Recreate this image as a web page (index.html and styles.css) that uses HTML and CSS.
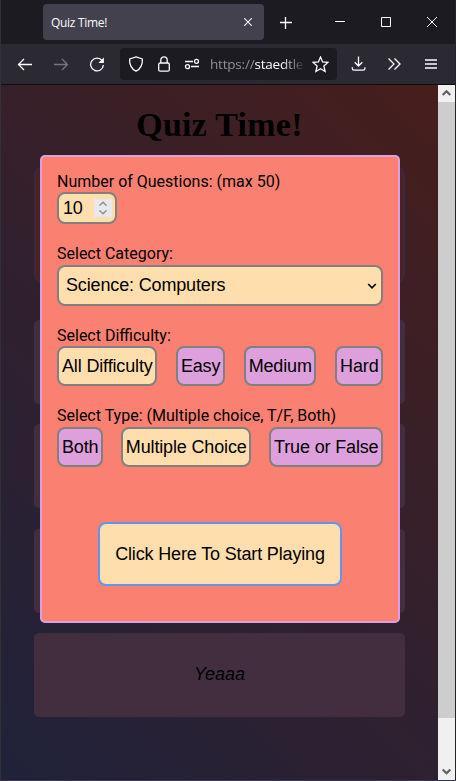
FILE: index.html
```html
<!DOCTYPE html>
<html lang="en">
<head>
<meta charset="utf-8">
<title>Quiz Time!</title>
<link rel="stylesheet" href="styles.css">
</head>
<body>
<div class="window">
  <header class="tabs">
    <div class="tab"><span>Quiz Time!</span>
      <svg width="8" height="8" viewBox="0 0 8 8"><path d="M0.3 0.3L7.7 7.7M7.7 0.3L0.3 7.7"/></svg>
    </div>
    <svg class="plus" width="12" height="12" viewBox="0 0 12 12"><path d="M5.500 0v12M0 5.500h12"/></svg>
    <svg class="min" width="10" height="10" viewBox="0 0 10 10"><path d="M0 4.5h10"/></svg>
    <svg class="max" width="10" height="10" viewBox="0 0 10 10"><path d="M.5 .5h9v9h-9z"/></svg>
    <svg class="close" width="10" height="10" viewBox="0 0 10 10"><path d="M0 0l10 10M10 0L0 10"/></svg>
  </header>
  <nav class="toolbar">
    <svg class="back" width="16" height="16" viewBox="0 0 16 16"><path d="M15 8.500H1.5M7 3L1.5 8.500L7 14"/></svg>
    <svg class="forward" width="16" height="16" viewBox="0 0 16 16"><path d="M1 8.500h13.5M9 3L14.5 8.500L9 14"/></svg>
    <svg class="reload" width="16" height="16" viewBox="0 0 16 16"><path d="M13.2 4.700A6.4 6.4 0 1 0 14.4 9.100"/><path class="solid" d="M14.9 1.500v5.6H9.4z"/></svg>
    <div class="address">
      <svg width="16" height="16" viewBox="0 0 16 16"><path d="M8 .9L14.3 3C14.8 7.8 12.8 13.2 8 15.2C3.2 13.2 1.2 7.8 1.7 3z"/></svg>
      <svg width="16" height="16" viewBox="0 0 16 16"><rect x="2.7" y="7" width="10.6" height="8.2" rx="1.5"/><path d="M4.8 7V4a3.2 3.2 0 0 1 6.4 0v3"/></svg>
      <svg width="16" height="16" viewBox="0 0 16 16"><path d="M1 5.5h8M7 10.5h8"/><circle cx="12.5" cy="5.3" r="2"/><circle cx="3.5" cy="10.7" r="2"/></svg>
      <span class="url">https://<b>staedtler</b></span>
      <svg class="star" width="17" height="17" viewBox="0 0 17 17"><path d="M8.5 1l2.1 4.9 5.3.5-4 3.5 1.2 5.6-4.6-2.8-4.6 2.8 1.2-5.6-4-3.5 5.3-.5z"/></svg>
    </div>
    <svg class="download" width="16" height="16" viewBox="0 0 16 16"><path d="M7.5 .5v9.5M3.7 6.2l3.8 3.8 3.8-3.8M1.3 11.2v1.2c0 1.2.6 1.8 1.8 1.8h9c1.2 0 1.8-.6 1.8-1.8v-1.2"/></svg>
    <svg class="more" width="14" height="14" viewBox="0 0 14 14"><path d="M1.5 1.5L7 7l-5.5 5.5M7.5 1.5L13 7l-5.500 5.500"/></svg>
    <svg class="menu" width="12" height="11" viewBox="0 0 12 11"><path d="M0 1h12M0 5h12M0 9h12"/></svg>
  </nav>
  <div class="viewport">
    <main class="page">
      <h1>Quiz Time!</h1>
      <div class="question"></div>
      <div class="answers">
        <div class="answer"></div>
        <div class="answer"></div>
        <div class="answer"></div>
        <div class="answer">Yeaaa</div>
      </div>
      <form class="modal">
        <label>Number of Questions: (max 50)</label>
        <div class="number field">10
          <span class="spinner"><svg width="10" height="14" viewBox="0 0 10 14"><path d="M1.500 4.500L5 1.300L8.500 4.500M1.500 9.500L5 12.700L8.500 9.500"/></svg></span>
        </div>
        <label>Select Category:</label>
        <div class="select field">Science: Computers
          <svg width="10" height="8" viewBox="0 0 10 8"><path d="M1.200 2L5 5.800L8.800 2"/></svg>
        </div>
        <label>Select Difficulty:</label>
        <div class="options difficulty">
          <button type="button" class="field chosen">All Difficulty</button>
          <button type="button" class="field">Easy</button>
          <button type="button" class="field">Medium</button>
          <button type="button" class="field">Hard</button>
        </div>
        <label>Select Type: (Multiple choice, T/F, Both)</label>
        <div class="options types">
          <button type="button" class="field">Both</button>
          <button type="button" class="field chosen">Multiple Choice</button>
          <button type="button" class="field">True or False</button>
        </div>
        <button type="button" class="start">Click Here To Start Playing</button>
      </form>
    </main>
    <div class="scrollbar">
      <svg width="17" height="17" viewBox="0 0 17 17"><path d="M4.700 10L8.500 6.200L12.300 10"/></svg>
      <div class="thumb"></div>
      <svg width="17" height="17" viewBox="0 0 17 17"><path d="M4.700 6.500L8.500 10.300L12.300 6.500"/></svg>
    </div>
  </div>
</div>
</body>
</html>
```
FILE: styles.css
```css
* { box-sizing: border-box; }
body { margin: 0; }
svg { display: block; flex: none; fill: none; stroke: #fbfbfe; stroke-width: 1.3; }
.window {
  width: 456px; height: 781px; overflow: hidden;
  border: solid #303235; border-width: 0 1px 1px;
  border-right-color: #25262a; border-bottom-color: #3a3650;
  background: #1c1b22;
  display: flex; flex-direction: column;
}
.tabs { height: 44px; display: flex; align-items: center; padding-left: 42px; flex: none; }
.tab {
  width: 221px; height: 36px; padding: 0 12px 0 8px; border-radius: 4px;
  background: #42414d; color: #fbfbfe;
  display: flex; align-items: center; justify-content: space-between;
  font: 12px "Open Sans", "Noto Sans", sans-serif; letter-spacing: -.3px;
}
.tab svg { stroke-width: 1.1; }
.plus { margin-left: 16px; margin-top: 1px; }
.min { margin-left: 43px; stroke-width: 1; }
.max { margin-left: 36px; stroke-width: 1; }
.close { margin-left: 36px; stroke-width: 1; }
.toolbar {
  height: 41px; flex: none; background: #2b2a33; border-bottom: 1px solid #0c0c0d;
  display: flex; align-items: center; padding-left: 16px;
}
.forward { margin-left: 20px; stroke: #77767d; }
.reload { margin-left: 20px; }
.solid { fill: #fbfbfe; stroke: none; }
.address {
  width: 217px; height: 32px; margin-left: 15px; padding: 0 8px; border-radius: 4px;
  background: #1c1b22; display: flex; align-items: center; gap: 12px;
}
.url {
  flex: 1; min-width: 0; white-space: nowrap; margin-left: -2px; margin-right: -11px;
  font: 13.500px "Open Sans", "Noto Sans", sans-serif; letter-spacing: -.2px; color: #8f8f97;
  -webkit-mask-image: linear-gradient(to right, #000 70%, transparent 94%);
  mask-image: linear-gradient(to right, #000 70%, transparent 94%);
}
.url b { font-weight: 400; color: #fbfbfe; }
.download { margin-left: 14px; }
.more { margin-left: 20px; }
.menu { margin-left: 24px; }
.viewport { flex: 1; display: flex; }
.page {
  position: relative; width: 437px; padding: 0 33px;
  background: linear-gradient(45deg, #20223a, #32202d 50%, #471e1c);
}
h1 {
  margin: 0; height: 81px; padding-top: 20px; text-align: center;
  font: bold 34px/40px "Liberation Serif", serif; letter-spacing: .25px; color: #000;
}
.question { height: 118px; border: 2px solid #3b2940; border-radius: 10px; background: #4b221f; }
.answers { display: grid; grid-auto-rows: 84px; gap: 20.300px; margin-top: 36px; }
.answer {
  border-radius: 5px; background: #432e40; color: #000;
  display: flex; align-items: center; justify-content: center;
  font: italic 18px "Liberation Sans", sans-serif;
}
.modal {
  position: absolute; left: 39px; top: 70px; width: 360px; height: 468px;
  padding: 15px; border: 2px solid plum; border-radius: 5px; background: salmon;
  display: flex; flex-direction: column;
}
label { font: 16px/20px Roboto, sans-serif; color: #000; white-space: nowrap; }
.field {
  border: 2px solid gray; border-radius: 8px; background: navajowhite; color: #000;
  font: 18px "Liberation Sans", sans-serif; letter-spacing: -.15px; white-space: nowrap;
}
.number {
  width: 60px; height: 32px; margin-bottom: 20px; padding: 0 3px 0 4px;
  display: flex; align-items: center; justify-content: space-between;
}
.spinner { width: 18px; height: 18px; background: #e9e9ed; display: flex; align-items: center; justify-content: center; }
.spinner svg { stroke: #8f8f9d; stroke-width: 1.500; }
.select {
  height: 41px; margin: 1px 0 20px; padding: 0 4px 0 7px;
  display: flex; align-items: center; justify-content: space-between;
}
.select svg { stroke: #000; stroke-width: 1.600; }
.options { display: flex; justify-content: space-between; }
.options .field { height: 40px; padding: 0 2.500px 0 3px; background: plum; }
.options .chosen { background: navajowhite; }
.difficulty { margin-bottom: 20px; }
.types { margin-top: 1px; }
.start {
  width: 244px; height: 64px; margin: 55px 0 0 41px; padding: 0;
  border: 2px solid cornflowerblue; border-radius: 8px; background: navajowhite; color: #000;
  font: 18px "Liberation Sans", sans-serif; letter-spacing: -.15px;
}
.scrollbar { width: 17px; background: #f0f0f0; display: flex; flex-direction: column; }
.scrollbar svg { stroke: #606060; stroke-width: 2.200; }
.scrollbar svg:last-child { margin-top: auto; }
.thumb { height: 616px; background: #cdcdcd; }
```
